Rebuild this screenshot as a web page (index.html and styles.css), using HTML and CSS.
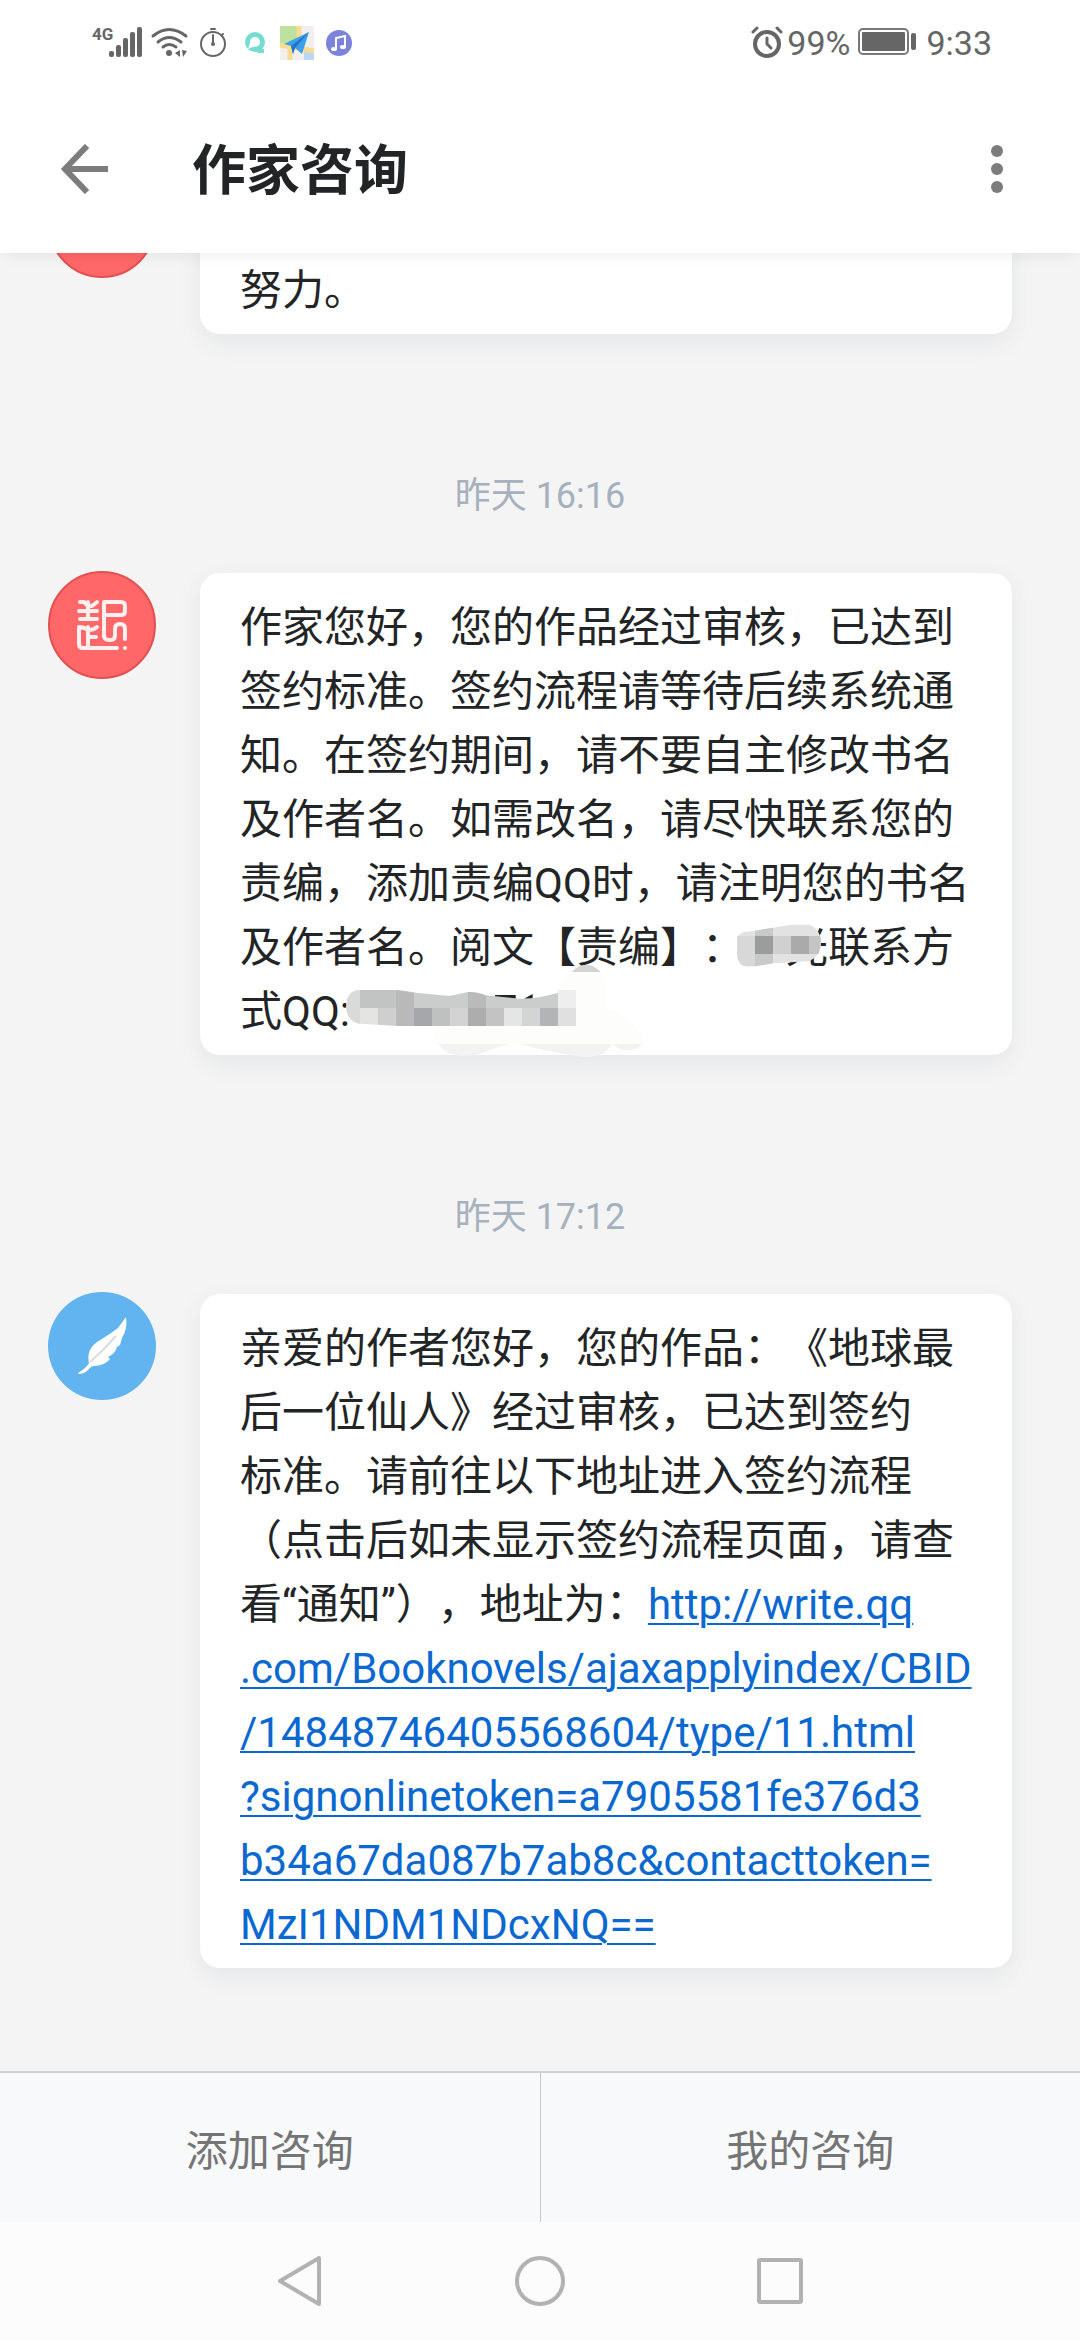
FILE: index.html
```html
<!DOCTYPE html>
<html lang="zh-CN">
<head>
<meta charset="utf-8">
<meta name="viewport" content="width=device-width, initial-scale=1">
<title>作家咨询</title>
<link rel="stylesheet" href="styles.css">
</head>
<body>
<div class="status">
  <div class="status-group status-left">
    <svg width="276" height="60" viewBox="0 0 276 60" role="img" aria-label="4G 信号">
      <g fill="#666">
        <text class="net" x="0" y="25">4G</text>
        <rect x="17" y="36" width="5" height="6" rx="2"/><rect x="24" y="30" width="5" height="12" rx="2"/><rect x="31" y="23" width="5" height="19" rx="2"/><rect x="38" y="17" width="5" height="25" rx="2"/><rect x="45" y="12" width="5" height="30" rx="2"/>
        <circle cx="77" cy="38" r="3"/>
        <path d="M88 35v7l-5-4zM90 35l5 1-4 6z"/>
      </g>
      <g fill="none" stroke="#666" stroke-width="3" stroke-linecap="round">
        <path d="M61 21q16-13 33 0M66 27q11-9 23 0M71 32q6-5 13 0"/>
        <g stroke-width="2"><circle cx="121" cy="29" r="12"/><path d="M119 14h4M121 28v-8M130 20l1-1"/></g>
      </g>
      <circle cx="121" cy="29" r="2" fill="#666"/>
      <circle cx="163" cy="27" r="10" fill="#75dccf"/><path d="M162 34h10v4h-6z" fill="#75dccf"/><circle cx="163" cy="27" r="5" fill="#fff"/><path d="M158 28l-2 6 7-3z" fill="#fff"/>
      <rect x="188" y="11" width="34" height="34" fill="#f2efee"/><path d="M188 11h19v17h-19z" fill="#bfe1a0"/><path d="M212 34h10v11h-10z" fill="#bcd6f5"/><path d="M188 30l34 6M207 11v18M198 31v14" stroke="#f8dc91" stroke-width="5"/>
      <path d="M192 29l25-12-7 22-7-6-2 6-2-8z" fill="#3da0ed"/><path d="M217 17l-14 16-2 6-2-8z" fill="#2476c5"/>
      <circle cx="247" cy="28" r="13" fill="#7b83dc"/><path d="M244 34V23l9-2v11" fill="none" stroke="#fff" stroke-width="2"/><ellipse cx="242" cy="34" rx="3" ry="2" fill="#fff"/><ellipse cx="251" cy="32" rx="3" ry="2" fill="#fff"/>
    </svg>
  </div>
  <div class="status-group">
    <svg width="32" height="32" viewBox="0 0 32 32" fill="none" stroke="#666" stroke-width="4" stroke-linecap="round" aria-hidden="true"><circle cx="16" cy="18" r="12"/><path d="M16 12v6l4 4" stroke-width="3"/><path d="M2 6l4-4M26 2l4 4" stroke-width="3"/></svg>
    <span class="percent">99%</span>
    <svg width="58" height="28" viewBox="0 0 58 28" aria-hidden="true"><rect x="1" y="1" width="49" height="25" rx="4" fill="none" stroke="#777" stroke-width="2"/><rect x="4" y="4" width="43" height="19" rx="1" fill="#666"/><rect x="53" y="5" width="5" height="17" rx="2" fill="#666"/></svg>
    <span class="clock">9:33</span>
  </div>
</div>
<header class="bar">
  <button class="icon-btn" aria-label="返回"><svg width="48" height="50" viewBox="0 0 48 50" fill="none" stroke="#7c7c7c" stroke-width="6"><path d="M48 25H5M27 2L5 25l22 23"/></svg></button>
  <h1>作家咨询</h1>
  <button class="icon-btn" aria-label="更多"><svg width="14" height="50" viewBox="0 0 14 50" fill="#7c7c7c"><circle cx="7" cy="7" r="6"/><circle cx="7" cy="25" r="6"/><circle cx="7" cy="43" r="6"/></svg></button>
</header>
<main class="chat">
  <article class="message">
    <div class="avatar avatar-red"></div>
    <div class="bubble bubble-tail"><p>努力。</p></div>
  </article>
  <time class="stamp">昨天 16:16</time>
  <article class="message">
    <div class="avatar avatar-red">
      <svg width="52" height="52" viewBox="0 0 52 52" fill="none" stroke="#fff" stroke-opacity=".9" stroke-width="4" stroke-linecap="round" stroke-linejoin="round" aria-hidden="true"><path d="M4 3h4l4 4 4 0 5-4M3 12h18M12 3v17M4 20h17M3 28v17q0 4 4 4h34M12 28v21M3 28q5 0 9 3 6 0 9-3M12 38h8M28 38V3h17q4 0 4 4v5q0 4-4 4H29M28 36q0 5 5 5h2q4 0 4-5v-6q0-5 5-5t5 5v10"/><path d="M49 49h0"/></svg>
    </div>
    <div class="bubble"><p>作家您好，您的作品经过审核，已达到<br>签约标准。签约流程请等待后续系统通<br>知。在签约期间，请不要自主修改书名<br>及作者名。如需改名，请尽快联系您的<br>责编，添加责编QQ时，请注明您的书名<br>及作者名。阅文【责编】：<span class="masked masked-name">光<svg class="mask-name" width="86" height="43" viewBox="51 42 258 129" aria-hidden="true"><path d="M54 90q0-20 24-24l30-4 54-9 54-9h54q36 12 36 58-2 40-40 52l-104 6-54 9H80q-26-4-26-40z" fill="#e2e2e2"/><path d="M54 78h54v91H80q-26-4-26-40z" fill="#d8d8d8"/><path d="M108 62l54-9v25h-54zM108 132h54v28l-54 9z" fill="#c9c9c9"/><path d="M108 78h54v54h-54z" fill="#9b9c9c"/><path d="M162 78h54v54h-54z" fill="#d0d0d0"/><path d="M216 78h54v54h-54z" fill="#aaa"/><path d="M270 78h34q4 28-6 54h-28z" fill="#c4c4c4"/></svg></span>联系方<br>式QQ:<span class="masked masked-id"><svg class="mask-id" width="303" height="100" viewBox="78 30 909 300" aria-hidden="true">
      <path d="M755 66q20-22 43-22t44 22z" fill="#d3d3d3"/>
      <path d="M755 66h87q18 12 20 110 90 30 110 106H350q-14-30-10-54h380V120q14-34 35-54z" fill="#fdfdfb"/>
      <path d="M355 282h215q-40 10-90 30-90 20-125-30zM600 282h275q-20 44-90 38-80-10-185-38zM875 282h95q-45 38-95 0z" fill="#f3f3f3"/>
      <path d="M525 135h62v12h-62zM612 146l26-14v14z" fill="#222"/>
      <path d="M120 120h-8q-34 8-34 50 2 44 42 52z" fill="#dadada"/>
      <path d="M120 120h108q30 2 60 8l100 10 56-12q30 0 54 10l100 10q60 0 116-18v46H120z" fill="#cbcdcc"/>
      <path d="M120 120h108v54H120z" fill="#c2c4c3"/>
      <path d="M120 174h54v50l-54-3z" fill="#e4e4e3"/><path d="M174 174h54v54l-54-4z" fill="#cfcfcf"/>
      <path d="M228 120l54 8v100h-54z" fill="#b9b9b9"/><path d="M282 174h54v54h-54z" fill="#a6a7aa"/>
      <path d="M336 174h54v54h-54z" fill="#bfc1c0"/><path d="M390 174h54v54h-54z" fill="#d3d3d3"/>
      <path d="M444 126q30 0 54 12v36h-54z" fill="#bababa"/><path d="M444 174h54v54h-54z" fill="#adadad"/>
      <path d="M498 174h54v54h-54z" fill="#c3c3c3"/><path d="M552 174h54v54h-54z" fill="#e5e5e5"/>
      <path d="M606 174h54v54h-54z" fill="#d3d5d4"/><path d="M660 174h54v54h-54z" fill="#b2b4b6"/>
      <path d="M714 120h54v54h-54z" fill="#eeeeee"/><path d="M714 174h54v54h-54z" fill="#e0e0e0"/>
    </svg></span></p></div>
  </article>
  <time class="stamp">昨天 17:12</time>
  <article class="message">
    <div class="avatar avatar-blue">
      <svg width="52" height="60" viewBox="0 0 52 60" aria-hidden="true"><path d="M50 1q2 11-4 21l-2 7-3 2q-2 7-9 10l2 2q-6 7-16 7-3 0-6 4-4 4-9 4l-1-1q5-3 9-7l2-3q-3-13 8-21 13-8 21-14z" fill="#fff"/><path d="M14 46q14-12 26-26" fill="none" stroke="#dcdcdc" stroke-width="2"/></svg>
    </div>
    <div class="bubble"><p>亲爱的作者您好，您的作品：《地球最<br>后一位仙人》经过审核，已达到签约<br>标准。请前往以下地址进入签约流程<br>（点击后如未显示签约流程页面，请查<br>看“通知”），地址为：<a href="#">http://write.qq<br>.com/Booknovels/ajaxapplyindex/CBID<br>/14848746405568604/type/11.html<br>?signonlinetoken=a7905581fe376d3<br>b34a67da087b7ab8c&amp;contacttoken=<br>MzI1NDM1NDcxNQ==</a></p></div>
  </article>
</main>
<div class="actions">
  <button class="action">添加咨询</button>
  <button class="action">我的咨询</button>
</div>
<nav class="system">
  <button class="icon-btn" aria-label="返回"><svg width="52" height="52" viewBox="0 0 52 52" fill="none" stroke="#b2b2b2" stroke-width="4" stroke-linejoin="round"><path d="M45 3v46L6 26z"/></svg></button>
  <button class="icon-btn" aria-label="主页"><svg width="52" height="52" viewBox="0 0 52 52" fill="none" stroke="#b2b2b2" stroke-width="4"><circle cx="26" cy="26" r="23"/></svg></button>
  <button class="icon-btn" aria-label="最近任务"><svg width="52" height="52" viewBox="0 0 52 52" fill="none" stroke="#b2b2b2" stroke-width="4"><rect x="5" y="5" width="42" height="42" rx="1"/></svg></button>
</nav>
</body>
</html>
```
FILE: styles.css
```css
* { box-sizing: border-box; margin: 0; }
body {
  height: 100vh;
  display: flex;
  flex-direction: column;
  background: #f4f4f4;
  color: #222426;
  font-family: Roboto, "Noto Sans CJK SC", sans-serif;
  text-spacing-trim: space-all;
}
button { border: 0; padding: 0; background: none; font: inherit; }
svg { display: block; }

.status {
  display: flex;
  justify-content: space-between;
  align-items: center;
  height: 84px;
  padding: 0 88px 0 92px;
  background: #fff;
  color: #666;
}
.status-group { display: flex; align-items: center; }
.status-left { padding-top: 6px; }
.net { font-size: 17px; font-weight: 700; }
.percent, .clock { padding-top: 2px; font-size: 34px; line-height: 40px; }
.percent { margin: 0 8px 0 4px; }
.clock { margin-left: 10px; }

.bar {
  display: flex;
  flex: none;
  align-items: center;
  height: 169px;
  padding: 0 76px 0 60px;
  background: #fff;
  box-shadow: 0 10px 12px -6px rgba(0, 0, 0, .06);
  position: relative;
}
.bar h1 { flex: 1; margin-left: 84px; padding-top: 6px; font-size: 54px; line-height: 80px; font-weight: 700; }

.chat {
  flex: 1;
  min-height: 0;
  overflow: hidden;
  display: flex;
  flex-direction: column;
  justify-content: flex-end;
  padding: 0 68px 103px 48px;
}
.message { display: flex; flex: none; gap: 44px; }
.avatar {
  flex: none;
  display: grid;
  place-items: center;
  width: 108px;
  height: 108px;
  margin-top: -2px;
  border-radius: 50%;
}
.avatar-red { background: #ff6768; border: 2px solid #e25152; }
.avatar-blue { background: #62b4f0; }
.bubble {
  flex: 1;
  padding: 23px 40px 11px;
  border-radius: 20px;
  background: #fff;
  box-shadow: 0 8px 24px rgba(60, 80, 100, .08);
  font-size: 42px;
  line-height: 64px;
  white-space: nowrap;
}
.bubble-tail { display: flex; align-items: flex-end; min-height: 162px; }
.bubble a { color: #0a68d0; text-decoration-thickness: 2px; text-underline-offset: 4px; }
.stamp {
  flex: none;
  padding: 138px 0 53px;
  margin-right: -20px;
  text-align: center;
  font-size: 36px;
  line-height: 48px;
  color: #a6b1be;
}
.masked { position: relative; display: inline-block; height: 64px; vertical-align: top; }
.masked-name { padding-left: 42px; }
.mask-name { position: absolute; left: -8px; top: 8px; }
.mask-id { position: absolute; left: -4px; top: -20px; }

.actions {
  display: flex;
  flex: none;
  height: 151px;
  border-top: 2px solid #d0d0d0;
  background: #f8f9fb;
}
.action { flex: 1; font-size: 42px; color: #757575; }
.action + .action { border-left: 1px solid #c8c8c8; }

.system {
  display: flex;
  flex: none;
  justify-content: center;
  align-items: center;
  gap: 188px;
  height: 118px;
  background: #fcfcfc;
}
```
